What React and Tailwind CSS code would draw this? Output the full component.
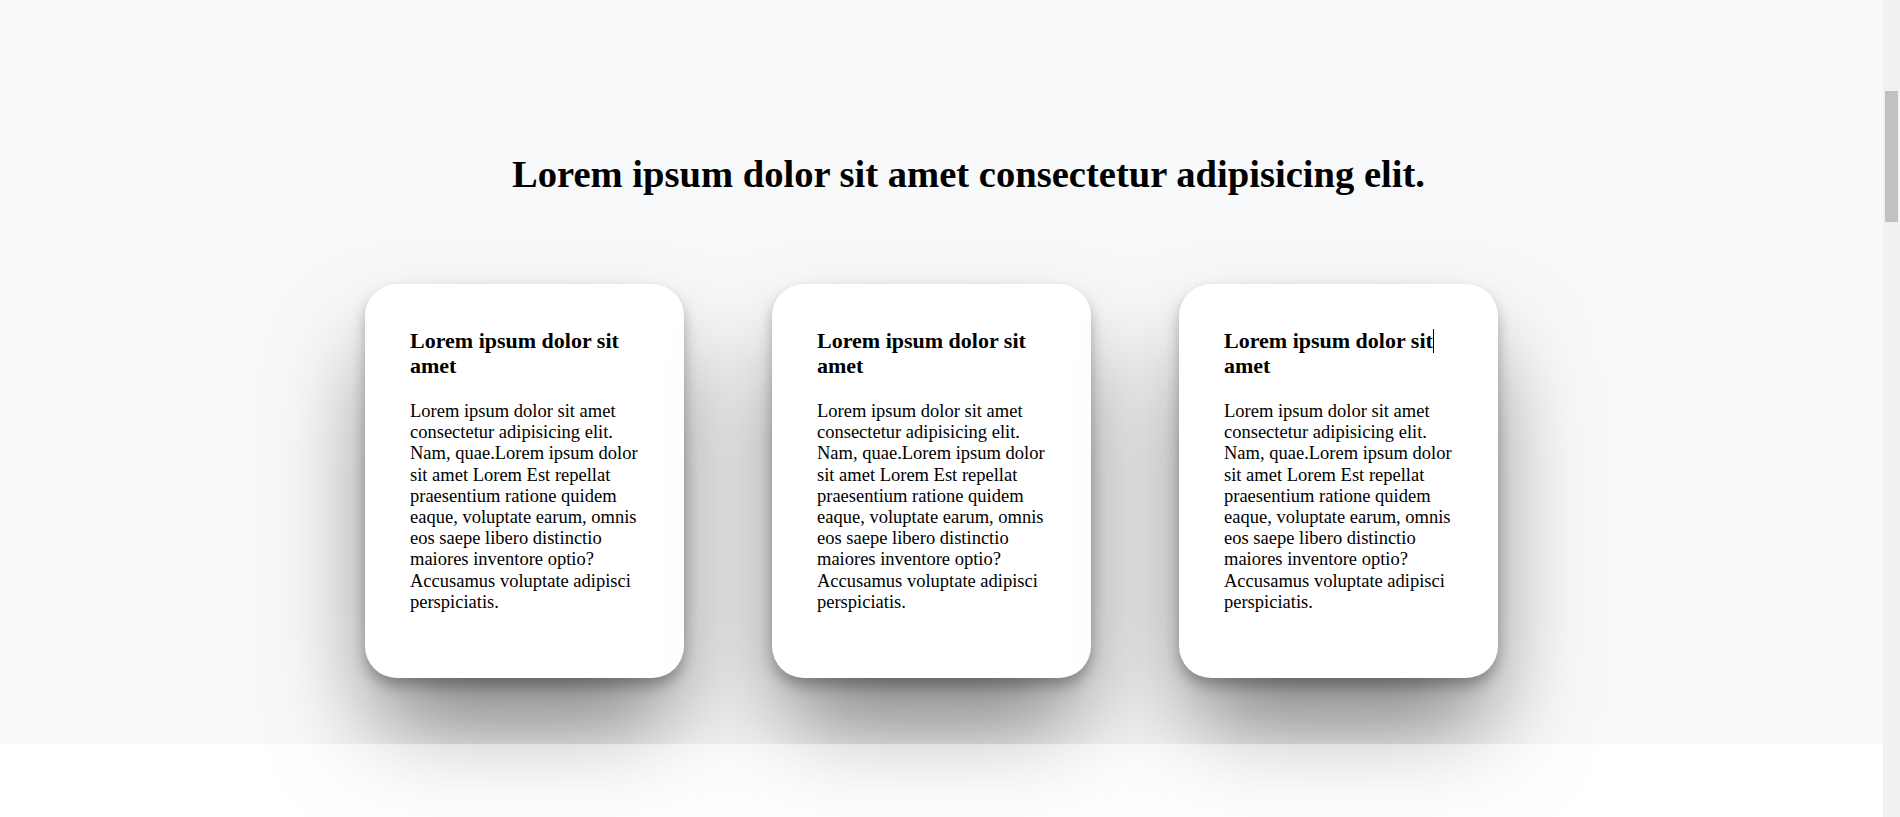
const cardText =
  'Lorem ipsum dolor sit amet consectetur adipisicing elit. Nam, quae.Lorem ipsum dolor sit amet Lorem Est repellat praesentium ratione quidem eaque, voluptate earum, omnis eos saepe libero distinctio maiores inventore optio? Accusamus voluptate adipisci perspiciatis.';

const cards = [
  { id: 1, title: 'Lorem ipsum dolor sit amet', caret: false },
  { id: 2, title: 'Lorem ipsum dolor sit amet', caret: false },
  { id: 3, title: 'Lorem ipsum dolor sit amet', caret: true },
];

function Card({ title, caret }) {
  // caret shows where the text cursor sat in the last card
  const [head, tail] = caret ? ['Lorem ipsum dolor sit', ' amet'] : [title, ''];

  return (
    <div className="w-[319px] h-[394px] shrink-0 rounded-[32px] bg-white pt-[44px] px-[45px] shadow-[0_8px_14px_rgba(0,0,0,0.28),0_60px_100px_-10px_rgba(0,0,0,0.5)]">
      <h3 className="text-[22px] leading-[25px] font-bold">
        {head}
        {caret && <span className="inline-block w-px h-[24px] -mr-px bg-black align-[-5px]" />}
        {tail}
      </h3>
      <p className="mt-[23px] text-[18.5px] leading-[21.2px]">{cardText}</p>
    </div>
  );
}

export default function App() {
  return (
    <div className="min-h-screen bg-white pr-[17px] text-black font-['Liberation_Serif',serif]">
      {/* Feature cards */}
      <section className="h-[744px] bg-[#f8f9fa] pt-[153px]">
        <h1 className="pl-[54px] text-center text-[38.6px] leading-[42px] font-bold">
          Lorem ipsum dolor sit amet consectetur adipisicing elit.
        </h1>

        <div className="mt-[89px] flex justify-center gap-[88px] pr-[20px]">
          {cards.map((card) => (
            <Card key={card.id} title={card.title} caret={card.caret} />
          ))}
        </div>
      </section>

      {/* Next section (sits over the card shadows) */}
      <section className="relative h-[6960px] bg-white/40" />

      {/* Window scrollbar */}
      <div className="fixed right-0 top-0 z-10 h-screen w-[17px] bg-[#f1f1f1] px-[2px] pt-[91px]">
        <div className="h-[131px] w-full bg-[#c1c1c1]" />
      </div>
    </div>
  );
}
